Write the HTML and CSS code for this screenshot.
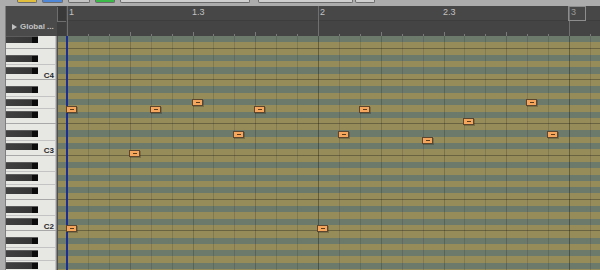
FILE: index.html
```html
<!DOCTYPE html>
<html lang="en">
<head>
    <meta charset="UTF-8">
    <meta name="viewport" content="width=device-width, initial-scale=1.0">
    <title>MIDI Editor</title>
    <link rel="stylesheet" href="styles.css">
</head>
<body>
    <div class="app">
        <div class="toolbar">
            <span class="tb-btn yellow"></span>
            <span class="tb-btn blue"></span>
            <span class="tb-btn gray"></span>
            <span class="tb-btn green"></span>
            <span class="tb-btn wide"></span>
            <span class="tb-btn mid"></span>
            <span class="tb-btn small"></span>
        </div>

        <div class="main">
            <div class="edge"></div>
            <div class="editor">
                <div class="header">
                    <div class="global">
                        <span class="arrow"></span>
                        <span>Global ...</span>
                    </div>
                    <div class="corner"><div class="corner-box"></div></div>
                    <div class="ruler" id="ruler">
                        <div class="ruler-top"></div>
                        <div class="ruler-bottom"></div>
                    </div>
                </div>

                <div class="body">
                    <div class="keys" id="keys"></div>
                    <div class="divider"></div>
                    <div class="grid" id="grid">
                        <div class="rows" id="rows"></div>
                        <div class="start-marker"></div>
                    </div>
                </div>
            </div>
        </div>
    </div>

    <script>
        const ROW_H = 6.3;
        const TOP_NOTE = 66;      // F#4, first row at the top
        const ROW_COUNT = 38;
        const STEP = 251 / 12;    // one eighth-note triplet
        const GRID_BAR1 = 9;      // bar 1 inside the grid
        const RULER_BAR1 = 1;     // bar 1 inside the ruler
        const blackKeys = [1, 3, 6, 8, 10];

        // [triplet step from bar 1, midi note]
        const notes = [
            [0, 55], [3, 48], [4, 55], [6, 56], [8, 51], [9, 55],
            [0, 36], [12, 36], [13, 51], [14, 55], [17, 50],
            [19, 53], [22, 56], [23, 51]
        ];

        const keys = document.getElementById("keys");
        const rows = document.getElementById("rows");
        const grid = document.getElementById("grid");
        const ruler = document.getElementById("ruler");

        for (let i = 0; i < ROW_COUNT; i++) {
            const midi = TOP_NOTE - i;
            const pitch = midi % 12;
            const isBlack = blackKeys.includes(pitch);

            const row = document.createElement("div");
            row.className = "row " + (isBlack ? "black" : "white");
            if (pitch === 0 || pitch === 5) row.classList.add("line");
            rows.appendChild(row);

            const key = document.createElement("div");
            key.className = "key";
            if (isBlack) {
                const bk = document.createElement("div");
                bk.className = "black-key";
                key.appendChild(bk);
            }
            if (pitch === 0 || pitch === 5) key.classList.add("line");
            if (pitch === 2 || pitch === 7 || pitch === 9) key.classList.add("split");
            if (pitch === 0) {
                const label = document.createElement("span");
                label.className = "c-label";
                label.textContent = "C" + (Math.floor(midi / 12) - 1);
                key.appendChild(label);
            }
            keys.appendChild(key);
        }

        // grid lines
        for (let k = 0; k <= 25; k++) {
            const line = document.createElement("div");
            line.className = "vline";
            if (k % 12 === 0) line.classList.add("bar");
            else if (k % 3 === 0) line.classList.add("beat");
            line.style.left = Math.round(GRID_BAR1 + k * STEP) + "px";
            grid.insertBefore(line, grid.lastElementChild);
        }

        // ruler ticks and numbers
        for (let k = 0; k <= 25; k++) {
            const x = RULER_BAR1 + k * STEP;
            const tick = document.createElement("div");
            tick.className = "tick";
            if (k % 12 === 0) tick.classList.add("bar");
            else if (k % 3 === 0) tick.classList.add("beat");
            tick.style.left = Math.round(x) + "px";
            ruler.appendChild(tick);
        }

        const labels = [[0, "1"], [6, "1.3"], [12, "2"], [18, "2.3"]];
        labels.forEach(([k, text]) => {
            const x = RULER_BAR1 + k * STEP;
            const label = document.createElement("span");
            label.className = "bar-label";
            label.textContent = text;
            label.style.left = (k % 12 === 0 ? x + 2 : x - 0.5) + "px";
            ruler.appendChild(label);
        });

        const loopEnd = document.createElement("div");
        loopEnd.className = "loop-end";
        loopEnd.textContent = "3";
        loopEnd.style.left = Math.round(RULER_BAR1 + 24 * STEP) - 1 + "px";
        ruler.appendChild(loopEnd);

        // notes
        notes.forEach(([step, midi]) => {
            const note = document.createElement("div");
            note.className = "note";
            note.style.left = Math.round(GRID_BAR1 - 1 + step * STEP) + "px";
            note.style.top = Math.round((TOP_NOTE - midi) * ROW_H + 0.4) + "px";
            grid.appendChild(note);
        });
    </script>
</body>
</html>
```

FILE: styles.css
```css
* {
    margin: 0;
    padding: 0;
    box-sizing: border-box;
}

html, body {
    width: 600px;
    height: 270px;
    overflow: hidden;
}

body {
    font-family: "Liberation Sans", Arial, sans-serif;
    background-color: #aaa;
}

.app {
    width: 600px;
    height: 270px;
    display: flex;
    flex-direction: column;
}

/* top toolbar, only the bottom of its buttons is visible */
.toolbar {
    height: 6px;
    flex-shrink: 0;
    display: flex;
    align-items: flex-start;
    padding-left: 17px;
    background-color: #acacac;
}

.tb-btn {
    height: 3px;
    border: 1px solid #6c6c6c;
    border-top: none;
    border-radius: 0 0 2px 2px;
    background-color: #cfcfcf;
}

.yellow { width: 20px; background-color: #e1bf3c; }
.blue { width: 21px; margin-left: 5px; background-color: #4e86d8; }
.gray { width: 22px; margin-left: 5px; background-color: #c3c3c3; }
.green { width: 20px; margin-left: 5px; background-color: #3bba4a; }
.wide { width: 130px; margin-left: 5px; }
.mid { width: 95px; margin-left: 8px; }
.small { width: 20px; margin-left: 2px; }

.main {
    flex: 1;
    display: flex;
    min-height: 0;
}

.edge {
    width: 6px;
    flex-shrink: 0;
    background-color: #adadad;
    box-shadow: inset -1px 0 #7e7e7e;
}

.editor {
    flex: 1;
    display: flex;
    flex-direction: column;
    min-width: 0;
}

/* header */
.header {
    height: 30px;
    flex-shrink: 0;
    display: flex;
    background-color: #454545;
}

.global {
    width: 51px;
    flex-shrink: 0;
    display: flex;
    align-items: center;
    gap: 3px;
    padding: 16px 0 5px 6px;
    background-color: #4a4a4a;
    color: #c4c4c4;
    font-size: 8px;
    line-height: 9px;
    font-weight: bold;
    white-space: nowrap;
}

.arrow {
    width: 0;
    height: 0;
    border-left: 5px solid #c0c0c0;
    border-top: 3px solid transparent;
    border-bottom: 3px solid transparent;
}

.corner {
    width: 9px;
    flex-shrink: 0;
    background-color: #3e3e3e;
}

.corner-box {
    height: 15px;
    margin-top: 1px;
    background-color: #393939;
    border-left: 1px solid #6e6e6e;
    border-bottom: 1px solid #6e6e6e;
}

.ruler {
    flex: 1;
    position: relative;
    display: flex;
    flex-direction: column;
}

.ruler-top {
    height: 15px;
    background-color: #474747;
    border-bottom: 1px solid #3d3d3d;
}

.ruler-bottom {
    flex: 1;
    background-color: #444;
}

.tick {
    position: absolute;
    bottom: 0;
    width: 1px;
    height: 2px;
    background-color: #7a7a7a;
}

.tick.beat {
    height: 4px;
}

.tick.bar {
    top: 0;
    height: auto;
    background-color: #707070;
}

.bar-label {
    position: absolute;
    top: 1px;
    font-size: 9px;
    line-height: 11px;
    color: #c2c2c2;
}

.loop-end {
    position: absolute;
    top: 0;
    width: 18px;
    height: 15px;
    padding-left: 2px;
    border: 1px solid #8d8d8d;
    font-size: 9px;
    line-height: 11px;
    color: #9a9a9a;
}

/* editor body */
.body {
    flex: 1;
    display: flex;
    min-height: 0;
    overflow: hidden;
}

.keys {
    width: 50px;
    flex-shrink: 0;
    display: flex;
    flex-direction: column;
    background-color: #e7e7e4;
    box-shadow: inset -1px 0 #c4c4c4;
}

.key {
    height: 6.3px;
    flex-shrink: 0;
    position: relative;
}

.key.line {
    box-shadow: inset 0 -1px #a8a8a8;
}

.key.split::after {
    content: "";
    position: absolute;
    left: 0;
    right: 0;
    top: 50%;
    height: 1px;
    background-color: #c3c3c3;
}

.black-key {
    position: relative;
    z-index: 1;
    width: 32px;
    height: 7px;
    margin-top: -0.35px;
    background: linear-gradient(to right, #404040 0, #363636 26px, #0b0b0b 26px);
    border-top: 1px solid #5c5c5c;
}

.c-label {
    position: absolute;
    right: 2px;
    top: -2px;
    font-size: 8px;
    line-height: 8px;
    font-weight: bold;
    color: #2a2a2a;
}

.divider {
    width: 2px;
    flex-shrink: 0;
    background-color: #8a8a8a;
    border-right: 1px solid #4f4f4f;
}

.grid {
    flex: 1;
    position: relative;
    overflow: hidden;
}

.rows {
    display: flex;
    flex-direction: column;
}

.row {
    height: 6.3px;
    flex-shrink: 0;
}

.row.white {
    background-color: #968c5a;
}

.row.black {
    background-color: #6c7a6b;
}

.row.line {
    box-shadow: inset 0 -1px #6a6341;
}

.vline {
    position: absolute;
    top: 0;
    bottom: 0;
    width: 1px;
    background-color: rgba(0, 0, 0, 0.12);
}

.vline.beat {
    background-color: rgba(0, 0, 0, 0.18);
}

.vline.bar {
    background-color: rgba(0, 0, 0, 0.32);
}

.start-marker {
    position: absolute;
    left: 8px;
    top: 0;
    bottom: 0;
    width: 2px;
    background-color: #1c2f8f;
}

.note {
    position: absolute;
    width: 11px;
    height: 7px;
    display: flex;
    align-items: center;
    justify-content: center;
    background-color: #f6a55d;
    border: 1px solid #5c4630;
    box-shadow: 1px 1px 0 rgba(0, 0, 0, 0.2);
}

.note::after {
    content: "";
    width: 4px;
    height: 1px;
    background-color: #5a3b1c;
}
```
